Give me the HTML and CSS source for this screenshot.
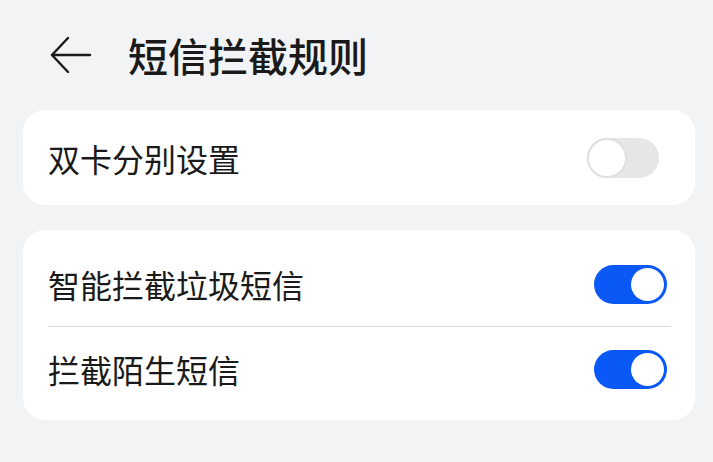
FILE: index.html
```html
<!DOCTYPE html>
<html lang="zh-CN">
<head>
  <meta charset="UTF-8" />
  <meta name="viewport" content="width=device-width, initial-scale=1" />
  <title>短信拦截规则</title>
  <link rel="stylesheet" href="styles.css">
</head>
<body>
  <header class="topbar">
    <button class="back" type="button" aria-label="返回">
      <svg width="44" height="44" viewBox="0 0 44 44" fill="none" stroke="#1a1a1a" stroke-width="2.4" stroke-linecap="round" stroke-linejoin="round">
        <path d="M41 22H3" />
        <path d="M19 5L3 22L19 39" />
      </svg>
    </button>
    <h1 class="title">短信拦截规则</h1>
  </header>

  <div class="card">
    <div class="row">
      <span class="label">双卡分别设置</span>
      <span class="switch off"></span>
    </div>
  </div>

  <div class="card list">
    <div class="row">
      <span class="label">智能拦截垃圾短信</span>
      <span class="switch on"></span>
    </div>
    <div class="row">
      <span class="label">拦截陌生短信</span>
      <span class="switch on"></span>
    </div>
  </div>
</body>
</html>
```

FILE: styles.css
```css
body {
  margin: 0;
  background: #f1f3f5;
  font-family: "Noto Sans CJK SC", "Noto Sans", sans-serif;
  color: #1a1a1a;
}
.topbar {
  display: flex;
  align-items: center;
  height: 110px;
  padding-left: 49px;
}
.back {
  display: flex;
  padding: 0;
  border: none;
  background: none;
  margin-right: 35px;
}
.title {
  margin: 0;
  font-size: 40px;
  font-weight: 500;
  line-height: 1;
}
.card {
  width: 672px;
  margin: 0 0 25px 23px;
  background: #fff;
  border-radius: 22px;
  padding: 0 24px 0 25px;
  box-sizing: border-box;
}
.card.list {
  padding-top: 12px;
  padding-bottom: 9px;
}
.row {
  display: flex;
  align-items: center;
  justify-content: space-between;
  height: 95px;
}
.list .row {
  height: 84px;
}
.row + .row {
  border-top: 1px solid #d9d9d9;
}
.label {
  font-size: 32px;
  line-height: 1;
}
.switch {
  position: relative;
  width: 73px;
  height: 39px;
  border-radius: 20px;
  box-sizing: border-box;
  margin-right: 4px;
}
.switch::after {
  content: "";
  position: absolute;
  border-radius: 50%;
  background: #fff;
}
.switch.off {
  width: 72px;
  height: 40px;
  background: #e6e6e6;
  margin-right: 12px;
}
.switch.off::after {
  left: 0;
  top: 0;
  width: 40px;
  height: 40px;
  box-sizing: border-box;
  border: 2px solid #e0e0e0;
}
.switch.on {
  background: #0a59f7;
}
.switch.on::after {
  right: 3px;
  top: 3px;
  width: 33px;
  height: 33px;
}
```
